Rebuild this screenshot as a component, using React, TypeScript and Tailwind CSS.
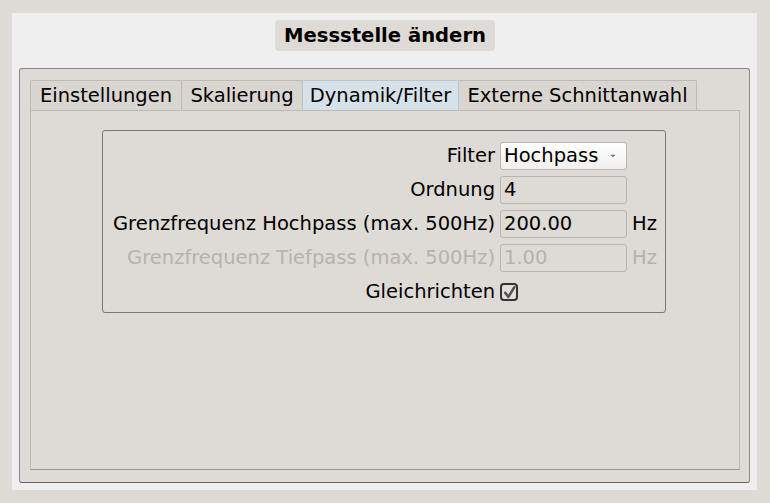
import React from "react";

const font = { fontFamily: '"DejaVu Sans", "Liberation Sans", sans-serif' };

function Field({ value, disabled }: { value: string; disabled?: boolean }) {
  return (
    <div
      className={`h-[28px] w-[127px] rounded-[3px] border border-[#b8b4b0] bg-[#dedad6] pl-[3px] flex items-center leading-none ${
        disabled ? "text-[#b6b2ae]" : "text-black"
      }`}
    >
      {value}
    </div>
  );
}

export default function App() {
  const tabs = [
    { label: "Einstellungen", w: "w-[152px]" },
    { label: "Skalierung", w: "w-[122px]" },
    { label: "Dynamik/Filter", w: "w-[157px]", active: true },
    { label: "Externe Schnittanwahl", w: "w-[239px]" },
  ];
  return (
    <div className="w-[770px] h-[503px] bg-[#dedad6] p-[13px] pl-[12px]" style={font}>
      <div className="h-full w-full bg-[#efefef] flex flex-col px-[7px] pt-[7px] pb-[7px]">
        <div className="flex justify-center">
          <div className="h-[31px] w-[220px] rounded-[4px] bg-[#dedad6] flex items-center justify-center text-[19.6px] font-bold text-black leading-none pl-[1px]">
            Messstelle ändern
          </div>
        </div>
        <div className="mt-[17px] flex-1 rounded-[3px] border border-[#8a8886] border-b-[#676563] bg-[#dedad6] pt-[11px] pl-[10px] pr-[9px] pb-[12px] flex flex-col">
          <div className="flex h-[30px]">
            {tabs.map((t, i) => (
              <div
                key={t.label}
                className={`${t.w} ${i > 0 ? "-ml-px" : ""} h-[30px] flex items-center justify-center border border-b-0 rounded-t-[2px] text-[19.5px] leading-none text-black ${
                  t.active
                    ? "bg-[#d6e1e9] border-[#b9c5cd] relative z-10"
                    : "bg-[#d9d5d1] border-[#bdb9b5]"
                }`}
              >
                {t.label}
              </div>
            ))}
          </div>
          <div className="flex-1 border border-[#bdb9b5] border-b-[#9a9692] bg-[#dedad6] flex pt-[19px] pl-[71px]">
            <div className="w-[564px] h-[183px] rounded-[3px] border border-[#7c7a78] pl-[10px] pr-[9px] pt-[11px]">
              <div className="grid grid-cols-[1fr_127px_25px] gap-x-[5px] gap-y-[6px] auto-rows-[28px] text-[19.5px] leading-none text-black">
                <div className="flex items-center justify-end whitespace-nowrap">Filter</div>
                <div className="h-[28px] w-[127px] rounded-[3px] border border-[#b8b4b0] bg-gradient-to-b from-[#ffffff] to-[#f1f0ef] pl-[3px] pr-[10px] flex items-center justify-between">
                  <span>Hochpass</span>
                  <svg width="6" height="4" viewBox="0 0 6 4">
                    <path d="M0.5 0.8 L3 3.2 L5.5 0.8 Z" fill="#6b6b6b" />
                  </svg>
                </div>
                <div />

                <div className="flex items-center justify-end whitespace-nowrap">Ordnung</div>
                <Field value="4" />
                <div />

                <div className="flex items-center justify-end whitespace-nowrap">
                  Grenzfrequenz Hochpass (max. 500Hz)
                </div>
                <Field value="200.00" />
                <div className="flex items-center">Hz</div>

                <div className="flex items-center justify-end whitespace-nowrap text-[#b6b2ae]">
                  Grenzfrequenz Tiefpass (max. 500Hz)
                </div>
                <Field value="1.00" disabled />
                <div className="flex items-center text-[#b6b2ae]">Hz</div>

                <div className="flex items-center justify-end whitespace-nowrap">Gleichrichten</div>
                <div className="flex items-center">
                  <div className="w-[18px] h-[18px] rounded-[4px] border-2 border-[#333333] bg-[#e2dfdc] flex items-center justify-center">
                    <svg width="13" height="13" viewBox="0 0 12 12">
                      <path
                        d="M2 6.2 L5 10 L10.5 1"
                        fill="none"
                        stroke="#555"
                        strokeWidth="2.4"
                        strokeLinecap="round"
                        strokeLinejoin="round"
                      />
                    </svg>
                  </div>
                </div>
                <div />
              </div>
            </div>
          </div>
        </div>
      </div>
    </div>
  );
}
